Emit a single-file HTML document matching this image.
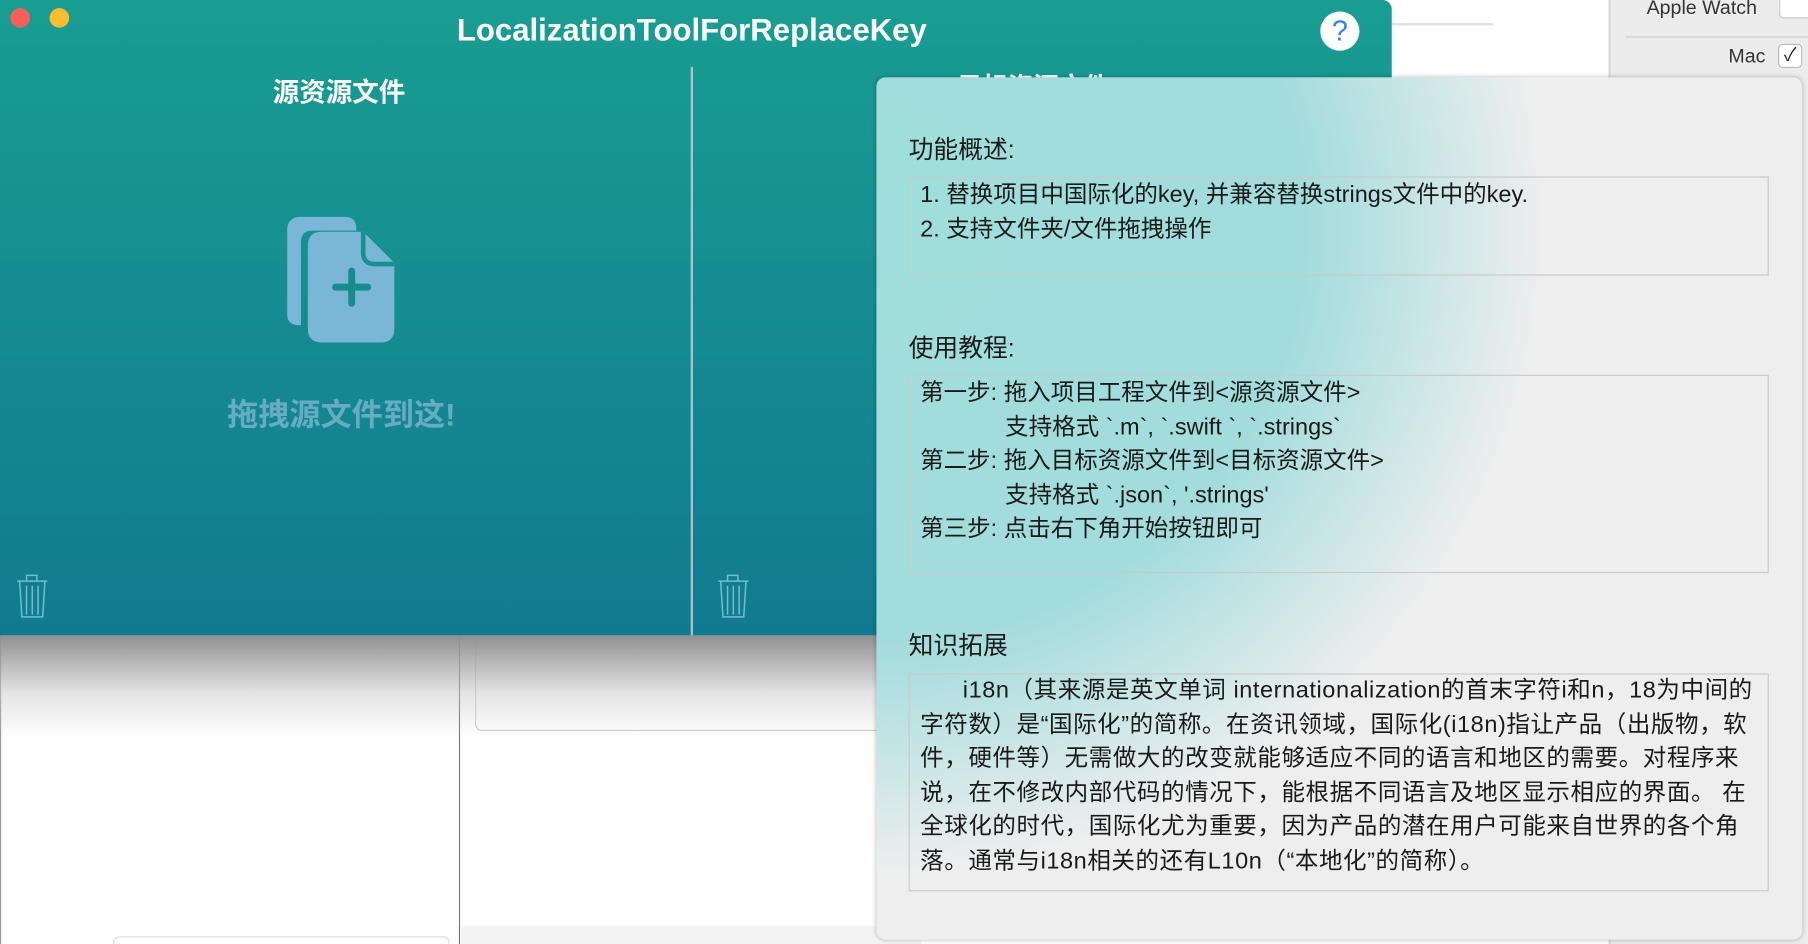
<!DOCTYPE html>
<html><head><meta charset="utf-8"><style>
html,body{margin:0;padding:0;width:1808px;height:944px;overflow:hidden;background:#fff}
#s{position:absolute;left:0;top:0;width:1568px;height:819px;transform:scale(1.15306);transform-origin:0 0;font-family:"Liberation Sans","Noto Sans CJK SC",sans-serif;overflow:hidden;background:#fff}
.a{position:absolute}
.t{position:absolute;white-space:nowrap}
.box{position:absolute;left:788px;width:746px;border:1.5px solid #c9c9c9;box-sizing:border-box}
.pt{font-size:20.4px;color:#1a1a1a;line-height:29.5px}
.h{font-size:21.5px;color:#1a1a1a}
</style></head><body><div id="s">
<div class="a" style="left:1207px;top:0;width:188px;height:819px;background:#fff"></div>
<div class="a" style="left:1207px;top:20px;width:88px;height:2px;background:#e0e0e0"></div>
<div class="a" style="left:1395px;top:0;width:2px;height:819px;background:#d8d8d8"></div>
<div class="a" style="left:1397px;top:0;width:171px;height:819px;background:#ececec"></div>
<div class="t" style="left:1428px;top:-3px;font-size:17px;color:#333">Apple Watch</div>
<div class="a" style="left:1543px;top:-6px;width:30px;height:20px;border:1px solid #ccc;border-radius:4px;background:#fff"></div>
<div class="a" style="left:1410px;top:31px;width:160px;height:2px;background:#d8d8d8"></div>
<div class="t" style="left:1499px;top:39px;font-size:17px;color:#333">Mac</div>
<div class="a" style="left:1542px;top:38px;width:19px;height:19px;border:1px solid #bbb;border-radius:4px;background:#fff;font-size:16px;line-height:19px;text-align:center;color:#222">✓</div>
<div class="a" style="left:0;top:551px;width:398px;height:268px;background:#fff;border-left:1px solid #999"></div>
<div class="a" style="left:398px;top:551px;width:1px;height:268px;background:#777"></div>
<div class="a" style="left:412px;top:551px;width:360px;height:82px;border:1.5px solid #ccc;border-top:none;border-radius:0 0 6px 6px"></div>
<div class="a" style="left:399px;top:803px;width:400px;height:16px;background:#f4f4f4"></div>
<div class="a" style="left:98px;top:812px;width:290px;height:10px;border:1.5px solid #ddd;border-radius:6px"></div>
<div class="a" style="left:0;top:551px;width:800px;height:90px;background:linear-gradient(#909090,rgba(200,200,200,.5) 55%,rgba(255,255,255,0))"></div>
<div class="a" style="left:0;top:0;width:1207px;height:551px;background:linear-gradient(#199d92,#117a90);border-radius:0 8px 0 0"></div>
<div class="a" style="left:9px;top:7px;width:17px;height:17px;border-radius:50%;background:#fc5f57"></div>
<div class="a" style="left:43px;top:7px;width:17px;height:17px;border-radius:50%;background:#fdbd2e"></div>
<div class="t" style="left:0;width:1200px;text-align:center;top:11px;font-size:27px;font-weight:bold;color:#fff">LocalizationToolForReplaceKey</div>
<div class="t" style="left:194px;width:200px;text-align:center;top:61px;font-size:23px;font-weight:bold;color:#fff">源资源文件</div>
<div class="a" style="left:599px;top:58px;width:2px;height:493px;background:#c6d8d6;opacity:.8"></div>
<svg class="a" style="left:249px;top:188px" width="95" height="112" viewBox="0 0 95 112">
<path d="M12 0h38q10 0 10 10v2H22q-10 0-10 10v72h-2Q0 94 0 84V12Q0 0 12 0z" fill="#7ab6d6"/>
<path d="M30 13h36l27 27v57q0 12-12 12H30q-12 0-12-12V25q0-12 12-12z" fill="#7ab6d6"/>
<path d="M66 13v18q0 10 10 10h17" fill="none" stroke="#188f91" stroke-width="4"/>
<path d="M56 47v28M42 61h28" stroke="#168c90" stroke-width="6" stroke-linecap="round"/>
</svg>
<div class="t" style="left:146px;width:300px;text-align:center;top:338px;font-size:27px;font-weight:bold;color:#67adc2">拖拽源文件到这!</div>
<svg class="a" style="left:13px;top:497px" width="30" height="42" viewBox="0 0 30 42"><g fill="none" stroke="#74bdd7" stroke-width="1.3"><path d="M10 7V2h9v5M2 7h26M4 7l2 31h18l2-31M10 11v25M15 11v25M20 11v25"/></g></svg>
<svg class="a" style="left:621px;top:497px" width="30" height="42" viewBox="0 0 30 42"><g fill="none" stroke="#74bdd7" stroke-width="1.3"><path d="M10 7V2h9v5M2 7h26M4 7l2 31h18l2-31M10 11v25M15 11v25M20 11v25"/></g></svg>
<div class="t" style="left:830px;top:58px;font-size:22px;font-weight:bold;color:#fff">目标资源文件</div>
<div class="a" style="left:1145px;top:10px;width:34px;height:34px;border-radius:50%;background:#fff;text-align:center;line-height:34px;font-size:25px;color:#2a82f0">?</div>
<svg class="a" style="left:1120px;top:44px" width="80" height="26" viewBox="0 0 80 26"><path d="M0 25Q20 25 30 12L40 2L50 12Q60 25 80 25Z" fill="#179890"/></svg>
<div class="a" style="left:760px;top:67px;width:803px;height:748px;border-radius:8px;background:radial-gradient(ellipse 580px 560px at 0 130px,#9fdedc 0%,#a3dcdd 64%,#eeeeee 100%),#eee;box-shadow:0 0 4px rgba(0,0,0,.25)"></div>
<div class="t h" style="left:788px;top:113px">功能概述:</div>
<div class="box" style="top:153px;height:86px"></div>
<div class="t pt" style="left:798px;top:155px">1. 替换项目中国际化的key, 并兼容替换strings文件中的key.<br>2. 支持文件夹/文件拖拽操作</div>
<div class="t h" style="left:788px;top:285px">使用教程:</div>
<div class="box" style="top:325px;height:172px"></div>
<div class="t pt" style="left:798px;top:327px">第一步: 拖入项目工程文件到&lt;源资源文件&gt;<br>&nbsp;&nbsp;&nbsp;&nbsp;&nbsp;&nbsp;&nbsp;&nbsp;&nbsp;&nbsp;&nbsp;&nbsp;&nbsp;支持格式 `.m`, `.swift `, `.strings`<br>第二步: 拖入目标资源文件到&lt;目标资源文件&gt;<br>&nbsp;&nbsp;&nbsp;&nbsp;&nbsp;&nbsp;&nbsp;&nbsp;&nbsp;&nbsp;&nbsp;&nbsp;&nbsp;支持格式 `.json`, '.strings'<br>第三步: 点击右下角开始按钮即可</div>
<div class="t h" style="left:788px;top:543px">知识拓展</div>
<div class="box" style="top:584px;height:189px"></div>
<div class="t pt" style="left:798px;top:585px;letter-spacing:0.5px">&nbsp;&nbsp;&nbsp;&nbsp;&nbsp;&nbsp;i18n（其来源是英文单词 internationalization的首末字符i和n，18为中间的<br>字符数）是“国际化”的简称。在资讯领域，国际化(i18n)指让产品（出版物，软<br>件，硬件等）无需做大的改变就能够适应不同的语言和地区的需要。对程序来<br>说，在不修改内部代码的情况下，能根据不同语言及地区显示相应的界面。 在<br>全球化的时代，国际化尤为重要，因为产品的潜在用户可能来自世界的各个角<br>落。通常与i18n相关的还有L10n（“本地化”的简称）。</div>
</div></body></html>
